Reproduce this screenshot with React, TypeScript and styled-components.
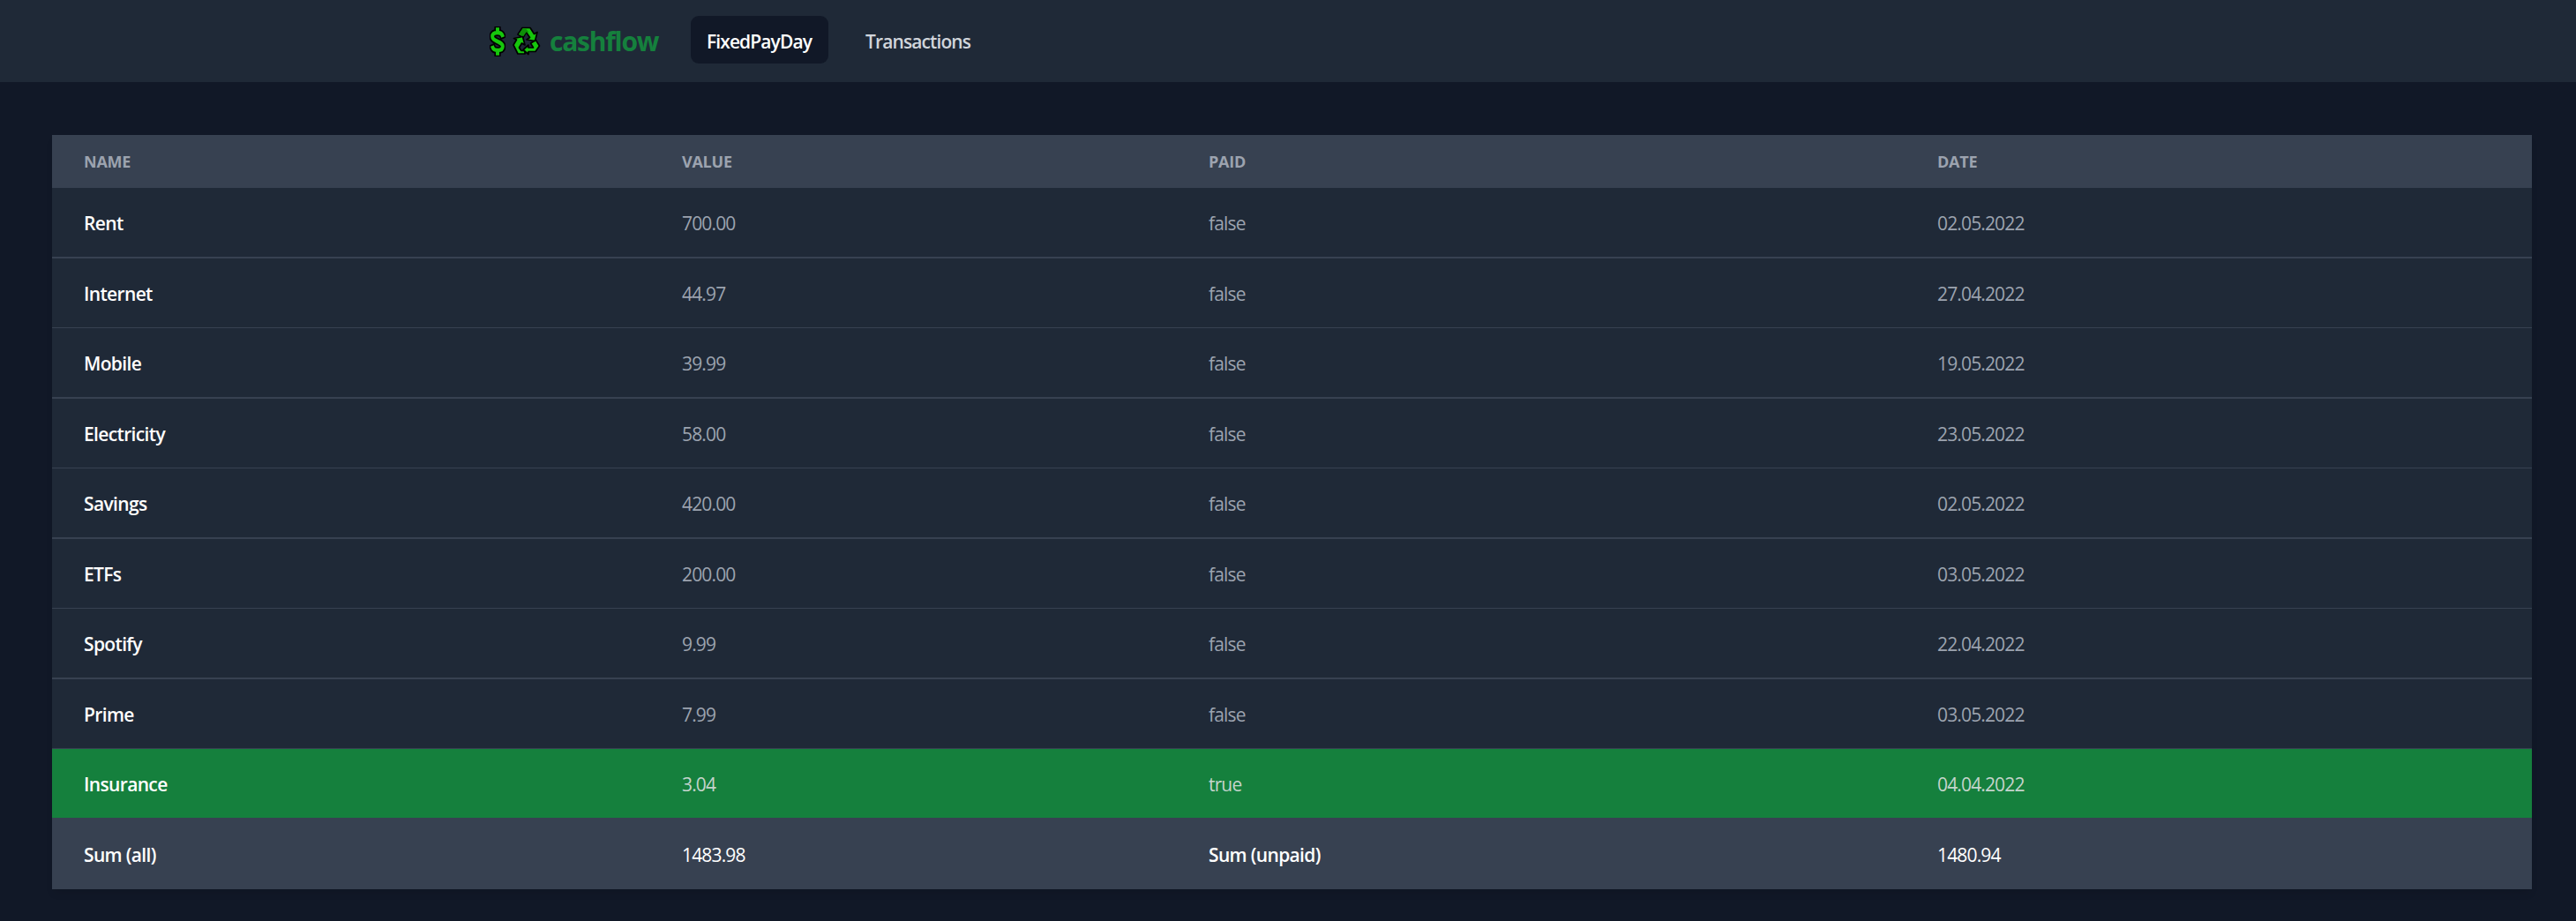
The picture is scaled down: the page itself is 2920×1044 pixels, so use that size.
import React from "react";
import styled, { createGlobalStyle } from "styled-components";

const GlobalStyle = createGlobalStyle`
  html, body {
    margin: 0;
    padding: 0;
    background-color: #111827;
    font-family: "Open Sans", "Noto Sans", "Liberation Sans", sans-serif;
  }
`;

const Page = styled.div`
  min-height: 1044px;
  background-color: #111827;
  overflow: hidden;
`;

const Navbar = styled.nav`
  height: 93px;
  background-color: #1f2937;
  display: flex;
  align-items: center;
  gap: 24px;
  padding: 0 0 3px 555px;
  box-sizing: border-box;
`;

const Logo = styled.div`
  display: flex;
  align-items: center;
  gap: 8px;
  width: 204px;
  margin-top: 3px;
`;

const LogoText = styled.span`
  margin-left: 2px;
  color: #15803d;
  font-size: 30px;
  font-weight: 700;
  line-height: 36px;
  letter-spacing: -1.25px;
`;

const NavLink = styled.a<{ $active?: boolean }>`
  display: block;
  padding: 14px 19px 10px 18px;
  border-radius: 9px;
  font-size: 21px;
  line-height: 30px;
  font-weight: 600;
  letter-spacing: -0.9px;
  color: ${(p) => (p.$active ? "#ffffff" : "#d1d5db")};
  background-color: ${(p) => (p.$active ? "#111827" : "transparent")};
`;

const Content = styled.main`
  padding: 60px 50px 0 59px;
`;

const Table = styled.table`
  width: 2811px;
  table-layout: fixed;
  border-collapse: separate;
  border-spacing: 0;
  box-shadow: 0 6px 9px -2px rgba(0, 0, 0, 0.1);
`;

const HeadRow = styled.tr`
  background-color: #374151;
`;

const HeadCell = styled.th<{ $width: number }>`
  width: ${(p) => p.$width}px;
  box-sizing: border-box;
  padding: 18px 36px;
  text-align: left;
  font-size: 18px;
  line-height: 24px;
  font-weight: 700;
  letter-spacing: -0.25px;
  text-transform: uppercase;
  color: #9ca3af;
`;

const Row = styled.tr<{ $paid: boolean }>`
  background-color: ${(p) => (p.$paid ? "#15803d" : "#1f2937")};
`;

const SumRow = styled.tr`
  height: 81px;
  background-color: #374151;
`;

const Cell = styled.td<{ $tone: "name" | "muted" | "paid" | "sum"; $line?: number }>`
  padding: 25px 36px 23px;
  font-size: 21px;
  line-height: 30px;
  letter-spacing: ${(p) => (p.$tone === "name" ? "-0.65px" : "-0.85px")};
  font-weight: ${(p) => (p.$tone === "name" ? 600 : p.$tone === "sum" ? 500 : 400)};
  color: ${(p) =>
    p.$tone === "name" || p.$tone === "sum"
      ? "#ffffff"
      : p.$tone === "paid"
        ? "#c4d4cc"
        : "#9ca3af"};
  border-bottom: ${(p) => (p.$line ? `${p.$line}px solid #374151` : "none")};
`;

const rows = [
  { name: "Rent", value: "700.00", paid: false, date: "02.05.2022" },
  { name: "Internet", value: "44.97", paid: false, date: "27.04.2022" },
  { name: "Mobile", value: "39.99", paid: false, date: "19.05.2022" },
  { name: "Electricity", value: "58.00", paid: false, date: "23.05.2022" },
  { name: "Savings", value: "420.00", paid: false, date: "02.05.2022" },
  { name: "ETFs", value: "200.00", paid: false, date: "03.05.2022" },
  { name: "Spotify", value: "9.99", paid: false, date: "22.04.2022" },
  { name: "Prime", value: "7.99", paid: false, date: "03.05.2022" },
  { name: "Insurance", value: "3.04", paid: true, date: "04.04.2022" },
];

const dollarPath =
  "M16 10 C15 7.5 13 7 10 7 C5.5 7 3.5 8.5 3.5 11.5 C3.5 14.5 6.5 15.5 10 17 C13.5 18.5 16.5 19.5 16.5 22.5 C16.5 25.5 14.5 27 10 27 C7 27 5 26.5 4 24 M10 3.5 V7 M10 27 V30.5";

const DollarIcon = () => (
  <svg width="18" height="34" viewBox="0 0 20 34" fill="none" preserveAspectRatio="none">
    <g strokeLinecap="square" strokeLinejoin="round">
      <path d={dollarPath} stroke="#000" strokeWidth="8" />
      <path d={dollarPath} stroke="#16c60c" strokeWidth="4.4" />
    </g>
  </svg>
);

const RecycleIcon = () => (
  <svg width="32" height="33" viewBox="0 0 32 33" stroke="#000" strokeWidth="1.7" strokeLinejoin="round">
    <path d="M11 1.5 H20 L24.5 8.5 L28 6.5 L25.5 16.5 L16 15 L19.5 12.5 L15.5 6.5 L12 12.5 L6 9 Z" fill="#16c60c" />
    <path d="M11.5 2.5 H15 L18.5 6.5 H15.5 L12 11.5 L7 9 Z" fill="#0e8f08" stroke="none" />
    <path d="M1 21 L4.5 15 L1.5 13.5 L11.5 11.5 L14 21 L10.5 19 L7.5 24 L10 27.5 H14 V31 H6 Z" fill="#16c60c" />
    <path d="M18 21 L12 26.5 L18 31.5 V28.5 H26 L30.5 22 L26.5 15.5 L20.5 19 L23.5 24 H18 Z" fill="#16c60c" />
  </svg>
);

export default function App() {
  return (
    <Page>
      <GlobalStyle />
      <Navbar>
        <Logo>
          <DollarIcon />
          <RecycleIcon />
          <LogoText>cashflow</LogoText>
        </Logo>
        <NavLink $active>FixedPayDay</NavLink>
        <NavLink>Transactions</NavLink>
      </Navbar>
      <Content>
        <Table>
          <thead>
            <HeadRow>
              <HeadCell $width={678}>Name</HeadCell>
              <HeadCell $width={597}>Value</HeadCell>
              <HeadCell $width={826}>Paid</HeadCell>
              <HeadCell $width={710}>Date</HeadCell>
            </HeadRow>
          </thead>
          <tbody>
            {rows.map((r, i) => {
              const line = r.paid ? 0 : i % 2 === 0 ? 2 : 1;
              const tone = r.paid ? "paid" : "muted";
              return (
                <Row key={r.name} $paid={r.paid}>
                  <Cell $tone="name" $line={line}>{r.name}</Cell>
                  <Cell $tone={tone} $line={line}>{r.value}</Cell>
                  <Cell $tone={tone} $line={line}>{String(r.paid)}</Cell>
                  <Cell $tone={tone} $line={line}>{r.date}</Cell>
                </Row>
              );
            })}
            <SumRow>
              <Cell $tone="name">Sum (all)</Cell>
              <Cell $tone="sum">1483.98</Cell>
              <Cell $tone="name">Sum (unpaid)</Cell>
              <Cell $tone="sum">1480.94</Cell>
            </SumRow>
          </tbody>
        </Table>
      </Content>
    </Page>
  );
}
